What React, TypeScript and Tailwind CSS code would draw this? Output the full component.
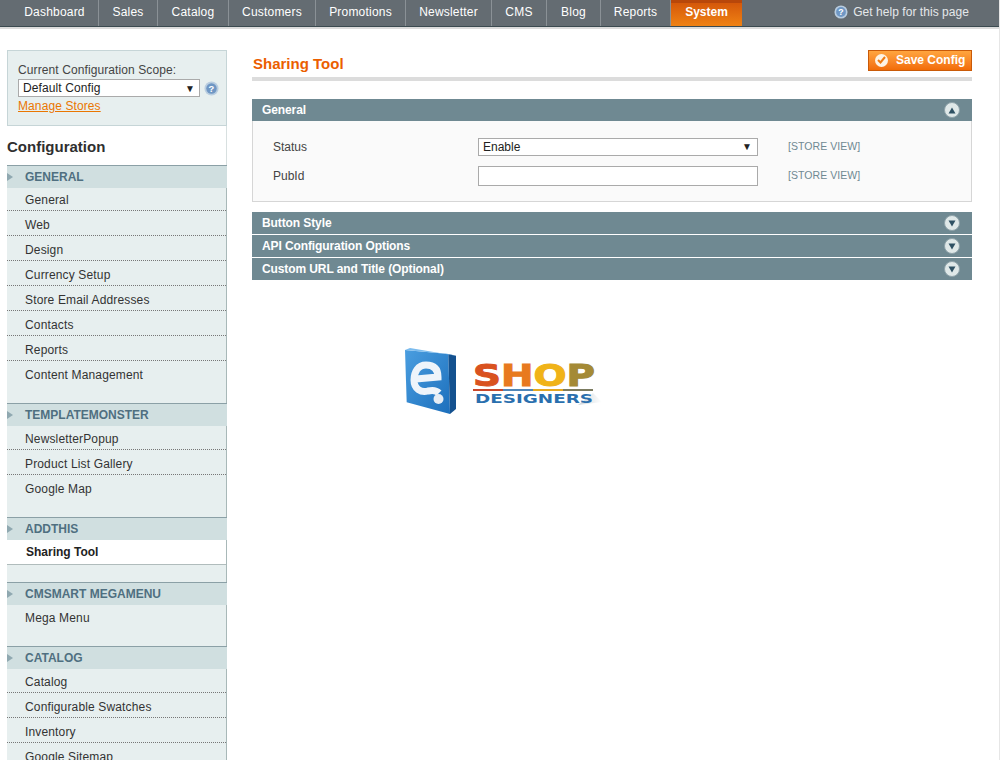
const navItems = ['Dashboard', 'Sales', 'Catalog', 'Customers', 'Promotions', 'Newsletter', 'CMS', 'Blog', 'Reports'];
const navWidths = [88, 59, 71, 87, 90, 86, 55, 54, 70];

interface Section {
  title: string;
  items: string[];
  spacer: string;
  active?: boolean;
  nudge?: boolean;
}

const sections: Section[] = [
  {
    title: 'GENERAL',
    items: ['General', 'Web', 'Design', 'Currency Setup', 'Store Email Addresses', 'Contacts', 'Reports', 'Content Management'],
    spacer: 'h-[17px]',
  },
  { title: 'TEMPLATEMONSTER', items: ['NewsletterPopup', 'Product List Gallery', 'Google Map'], spacer: 'h-[17px]', nudge: true },
  { title: 'ADDTHIS', items: ['Sharing Tool'], spacer: 'h-[17px]', active: true },
  { title: 'CMSMART MEGAMENU', items: ['Mega Menu'], spacer: 'h-[17px]', nudge: true },
  { title: 'CATALOG', items: ['Catalog', 'Configurable Swatches', 'Inventory', 'Google Sitemap'], spacer: 'h-0', nudge: true },
];

function RoundToggle({ up }: { up?: boolean }) {
  return (
    <span className="flex h-[16px] w-[16px] items-center justify-center rounded-full border border-[#8fa3aa] bg-[#dfe8e8]">
      <svg width="8" height="7" viewBox="0 0 8 7">
        <path d={up ? 'M4 0.5 L7.5 6.5 L0.5 6.5 Z' : 'M0.5 0.5 L7.5 0.5 L4 6.5 Z'} fill="#2f5163" />
      </svg>
    </span>
  );
}

function HelpIcon({ size }: { size: number }) {
  return (
    <svg width={size} height={size} viewBox="0 0 16 16">
      <circle cx="8" cy="8" r="7.5" fill="#b9cde0" />
      <circle cx="8" cy="8" r="5.6" fill="#6f97c4" />
      <text x="8" y="11.4" textAnchor="middle" fontSize="10" fontWeight="700" fill="#fff" fontFamily="'Liberation Sans', sans-serif">
        ?
      </text>
    </svg>
  );
}

function Logo() {
  return (
    <svg width="200" height="76" viewBox="0 0 200 76">
      <defs>
        <linearGradient id="tile" x1="0" y1="0" x2="1" y2="1">
          <stop offset="0" stopColor="#4a9ee0" />
          <stop offset="1" stopColor="#1c6fbc" />
        </linearGradient>
        <linearGradient id="shadow" x1="0" y1="0" x2="1" y2="0">
          <stop offset="0" stopColor="#cfd6da" />
          <stop offset="1" stopColor="#ffffff" />
        </linearGradient>
      </defs>
      <path d="M3 5 L46.3 9 L48 69 L4.7 57.3 Z" fill="url(#tile)" />
      <path d="M46.3 9 L54 10.7 L54 64 L48 69 Z" fill="#14518f" />
      <path d="M3 5 L8 3 L54 10.7 L46.3 9 Z" fill="#7cbcee" />
      <path
        d="M14 34 L36 32 C36 24 32 20 24 20 C16 20 12 27 12 35 C12 44 19 48 26 46 C30 45 34 45 37 48"
        stroke="#eef4fa"
        strokeWidth="7"
        fill="none"
      />
      <circle cx="36.5" cy="54" r="5" fill="#e6edf4" />
      <text
        x="71"
        y="41"
        fontFamily="'DejaVu Sans', sans-serif"
        fontWeight="700"
        fontSize="30"
        textLength="122"
        lengthAdjust="spacingAndGlyphs"
        strokeWidth="1"
      >
        <tspan fill="#d9521f" stroke="#d9521f">S</tspan>
        <tspan fill="#e87a1e" stroke="#e87a1e">H</tspan>
        <tspan fill="#f0b318" stroke="#f0b318">O</tspan>
        <tspan fill="#a48a36" stroke="#a48a36">P</tspan>
      </text>
      <rect x="71" y="44" width="30" height="2" fill="#c9472a" />
      <rect x="101" y="44" width="30" height="2" fill="#4f86b8" />
      <rect x="131" y="44" width="30" height="2" fill="#e5a820" />
      <rect x="161" y="44" width="30" height="2" fill="#7b7b60" />
      <path d="M191 48 L200 57 L176 60 Z" fill="url(#shadow)" />
      <text
        x="73"
        y="58"
        fill="#2a6fae"
        fontFamily="'DejaVu Sans', sans-serif"
        fontWeight="700"
        fontSize="13"
        textLength="118"
        lengthAdjust="spacingAndGlyphs"
      >
        DESIGNERS
      </text>
    </svg>
  );
}

function ScopeBox() {
  return (
    <div className="h-[76px] border border-[#c6d5d7] bg-[#e7efef] pl-[10px] pt-[12px] text-[12px] leading-[15px] tracking-[0.1px] text-[#444]">
      <div>Current Configuration Scope:</div>
      <div className="mt-[1px] flex items-center gap-[4px]">
        <div className="flex h-[18px] w-[182px] shrink-0 items-center justify-between border border-[#aaa] bg-white pl-[4px] pr-[4px] text-[#222]">
          <span>Default Config</span>
          <span className="text-[10px]">▼</span>
        </div>
        <HelpIcon size={15} />
      </div>
      <a className="mt-[2px] block text-[#ea7601] underline">Manage Stores</a>
    </div>
  );
}

function Sidebar() {
  return (
    <aside className="w-[220px] shrink-0">
      <ScopeBox />
      <div className="flex h-[39px] items-center border-r border-[#d8e0e0] bg-white pt-[3px] text-[15px] font-bold text-[#2f2f2f]">
        Configuration
      </div>
      {sections.map((section) => (
        <div key={section.title}>
          <div className="flex h-[23px] items-center border-t border-[#8ba0a6] bg-[#d0dfe0] text-[12px] font-bold text-[#4f6f80]">
            <svg className="mr-[12px] shrink-0" width="6" height="8" viewBox="0 0 6 8">
              <path d="M0 0 L6 4 L0 8 Z" fill="#8fa8b0" />
            </svg>
            <span>{section.title}</span>
          </div>
          <div className={section.nudge ? 'border-r border-[#a8b8b8] bg-[#e7efef] pt-[1px]' : 'border-r border-[#a8b8b8] bg-[#e7efef]'}>
            {section.items.map((item, i) =>
              section.active ? (
                <div key={item} className="h-[25px] border-b border-[#b0bcbc] bg-white pl-[19px] pt-[5px] text-[12px] font-bold leading-[15px] text-[#222]">
                  {item}
                </div>
              ) : (
                <div
                  key={item}
                  className={
                    (i === 0 ? 'h-[23px] pt-[5px] ' : 'h-[25px] pt-[7px] ') +
                    (i < section.items.length - 1 ? 'border-b border-dotted border-[#777] ' : '') +
                    'pl-[18px] text-[12px] leading-[15px] tracking-[0.15px] text-[#333]'
                  }
                >
                  {item}
                </div>
              ),
            )}
            <div className={section.spacer} />
          </div>
        </div>
      ))}
    </aside>
  );
}

function Bar({ title, up }: { title: string; up?: boolean }) {
  return (
    <div className="flex h-[22px] items-center justify-between bg-[#6f8992] pl-[10px] pr-[12px] text-[12px] font-bold tracking-[-0.1px] text-white">
      <span>{title}</span>
      <RoundToggle up={up} />
    </div>
  );
}

function FormRow({ label, children }: { label: string; children: React.ReactNode }) {
  return (
    <div className="flex h-[20px] items-center text-[12px] text-[#444]">
      <div className="w-[225px] pl-[20px]">{label}</div>
      <div className="w-[280px]">{children}</div>
      <div className="ml-[30px] text-[10.5px] tracking-[0.05px] text-[#6f8992]">[STORE VIEW]</div>
    </div>
  );
}

export default function App() {
  return (
    <div className="h-[760px] overflow-hidden border-r border-[#e6e6e6] bg-white font-['Liberation_Sans',Arial,sans-serif]">
      <div className="flex h-[27px] items-start border-b border-[#3b4a50] bg-[#646c72]">
        <div className="w-[11px]" />
        {navItems.map((name, i) => (
          <div
            key={name}
            style={{ width: navWidths[i] }}
            className="flex h-[26px] items-center justify-center border-r border-[#8a9196] pb-[2px] text-[12px] tracking-[0.2px] text-white"
          >
            {name}
          </div>
        ))}
        <div className="flex h-[26px] w-[71px] items-center justify-center border-t-[3px] border-[#b8470a] bg-gradient-to-b from-[#d5580a] to-[#ef8214] pb-[5px] text-[12px] font-bold text-white">
          System
        </div>
        <div className="ml-auto flex h-[26px] items-center gap-[5px] pb-[2px] pr-[30px] text-[12px] tracking-[0.05px] text-[#e4e8ea]">
          <HelpIcon size={14} />
          Get help for this page
        </div>
      </div>
      <div className="h-[2px] bg-[#dcdcdc]" />
      <div className="flex pl-[7px] pr-[27px] pt-[21px]">
        <Sidebar />
        <main className="ml-[25px] min-w-0 flex-1">
          <div className="flex h-[31px] items-start justify-between border-b-4 border-[#dcdcdc]">
            <h1 className="pl-[1px] pt-[3px] text-[15px] font-bold text-[#eb5e00]">Sharing Tool</h1>
            <button className="flex h-[21px] w-[104px] items-center border border-[#c95a08] bg-gradient-to-b from-[#ffa53e] to-[#f26c05] pb-[1px] pl-[6px] text-[12px] font-bold text-white">
              <span className="mr-[8px] flex h-[13px] w-[13px] items-center justify-center rounded-full bg-[#fdf3e4]">
                <svg width="9" height="8" viewBox="0 0 9 8">
                  <path d="M1 4 L3.5 6.5 L8 1" stroke="#ef7a10" strokeWidth="2" fill="none" />
                </svg>
              </span>
              Save Config
            </button>
          </div>
          <div className="mt-[18px]">
            <Bar title="General" up />
            <div className="h-[81px] border border-t-0 border-[#d6d6d6] bg-[#fafafa] pt-[16px]">
              <FormRow label="Status">
                <div className="mb-[1px] flex h-[18px] items-center justify-between border border-[#aaa] bg-white pl-[4px] pr-[5px] text-[#222]">
                  <span>Enable</span>
                  <span className="text-[10px]">▼</span>
                </div>
              </FormRow>
              <div className="h-[9px]" />
              <FormRow label="PubId">
                <div className="h-[20px] border border-[#aaa] bg-white" />
              </FormRow>
            </div>
          </div>
          <div className="mt-[10px] flex flex-col gap-[1px]">
            <Bar title="Button Style" />
            <Bar title="API Configuration Options" />
            <Bar title="Custom URL and Title (Optional)" />
          </div>
          <div className="ml-[150px] mt-[65px]">
            <Logo />
          </div>
        </main>
      </div>
    </div>
  );
}
